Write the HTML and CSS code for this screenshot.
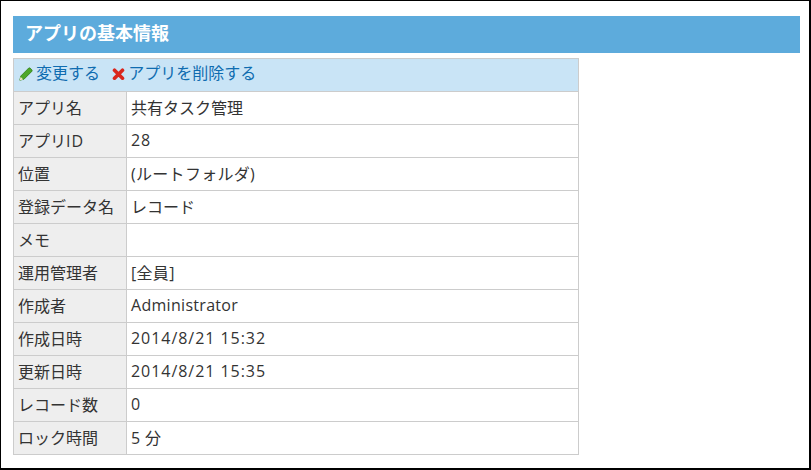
FILE: index.html
```html
<!DOCTYPE html>
<html lang="ja">
<head>
  <meta charset="UTF-8" />
  <title>アプリの基本情報</title>
  <link rel="stylesheet" href="styles.css">
</head>
<body>
<div class="frame">
  <h1 class="title">アプリの基本情報</h1>

  <table class="info-table">
    <colgroup>
      <col class="label-col">
      <col>
    </colgroup>
    <tr>
      <td class="actions" colspan="2">
        <a class="action" href="#">
          <svg class="icon" viewBox="0 0 14 14" width="14" height="14">
            <path d="M0.8 13.2 L1.8 9 L9.6 1.2 Q10.4 0.5 11.2 1.2 L12.8 2.8 Q13.5 3.6 12.8 4.4 L5 12.2 Z" fill="#4ea72a" stroke="#2f7d14" stroke-width="0.8"/>
            <path d="M0.8 13.2 L1.6 9.8 L4.2 12.4 Z" fill="#f3e6c4"/>
          </svg>変更する</a>
        <a class="action" href="#">
          <svg class="icon" viewBox="0 0 13 14" width="13" height="14">
            <path d="M2.5 3.2 L10.5 11.2 M10.5 3.2 L2.5 11.2" stroke="#d9261c" stroke-width="3.6" stroke-linecap="round"/>
          </svg>アプリを削除する</a>
      </td>
    </tr>
    <tr><th>アプリ名</th><td>共有タスク管理</td></tr>
    <tr><th>アプリ<span class="latin">ID</span></th><td class="latin">28</td></tr>
    <tr><th>位置</th><td class="spaced">(ルートフォルダ)</td></tr>
    <tr><th>登録データ名</th><td>レコード</td></tr>
    <tr><th>メモ</th><td></td></tr>
    <tr><th>運用管理者</th><td class="spaced">[全員]</td></tr>
    <tr><th>作成者</th><td class="spaced">Administrator</td></tr>
    <tr><th>作成日時</th><td class="latin">2014/8/21 15:32</td></tr>
    <tr><th>更新日時</th><td class="latin">2014/8/21 15:35</td></tr>
    <tr><th>レコード数</th><td class="latin">0</td></tr>
    <tr><th>ロック時間</th><td class="spaced">5 分</td></tr>
  </table>
</div>
</body>
</html>
```

FILE: styles.css
```css
* {
  margin: 0;
  padding: 0;
  box-sizing: border-box;
}

body {
  font-family: "Open Sans", "Noto Sans CJK JP", sans-serif;
  font-size: 16px;
  color: #333;
  background: #fff;
}

.frame {
  width: 811px;
  height: 470px;
  border-style: solid;
  border-color: #000;
  border-width: 1px 2px 2px 1px;
  padding: 15px 9px 0 12px;
}

.title {
  height: 37px;
  line-height: 34px;
  padding-left: 12px;
  background: #5dabdc;
  color: #fff;
  font-size: 18px;
  font-weight: bold;
}

.info-table {
  width: 566px;
  margin-top: 5px;
  border-collapse: collapse;
  table-layout: fixed;
}

.label-col {
  width: 113px;
}

.info-table th,
.info-table td {
  height: 33px;
  border: 1px solid #ccc;
  padding: 0 4px 3px;
  font-weight: normal;
  text-align: left;
  white-space: nowrap;
}

.info-table th {
  background: #eee;
}

.info-table .actions {
  background: #c9e4f6;
  padding-left: 5px;
  padding-bottom: 7px;
}

.latin {
  letter-spacing: 0.95px;
}

.spaced {
  letter-spacing: 0.3px;
}

.action {
  margin-right: 8px;
  color: #0f6cb0;
  text-decoration: none;
}

.icon {
  margin-right: 3px;
  vertical-align: -2px;
}
```
